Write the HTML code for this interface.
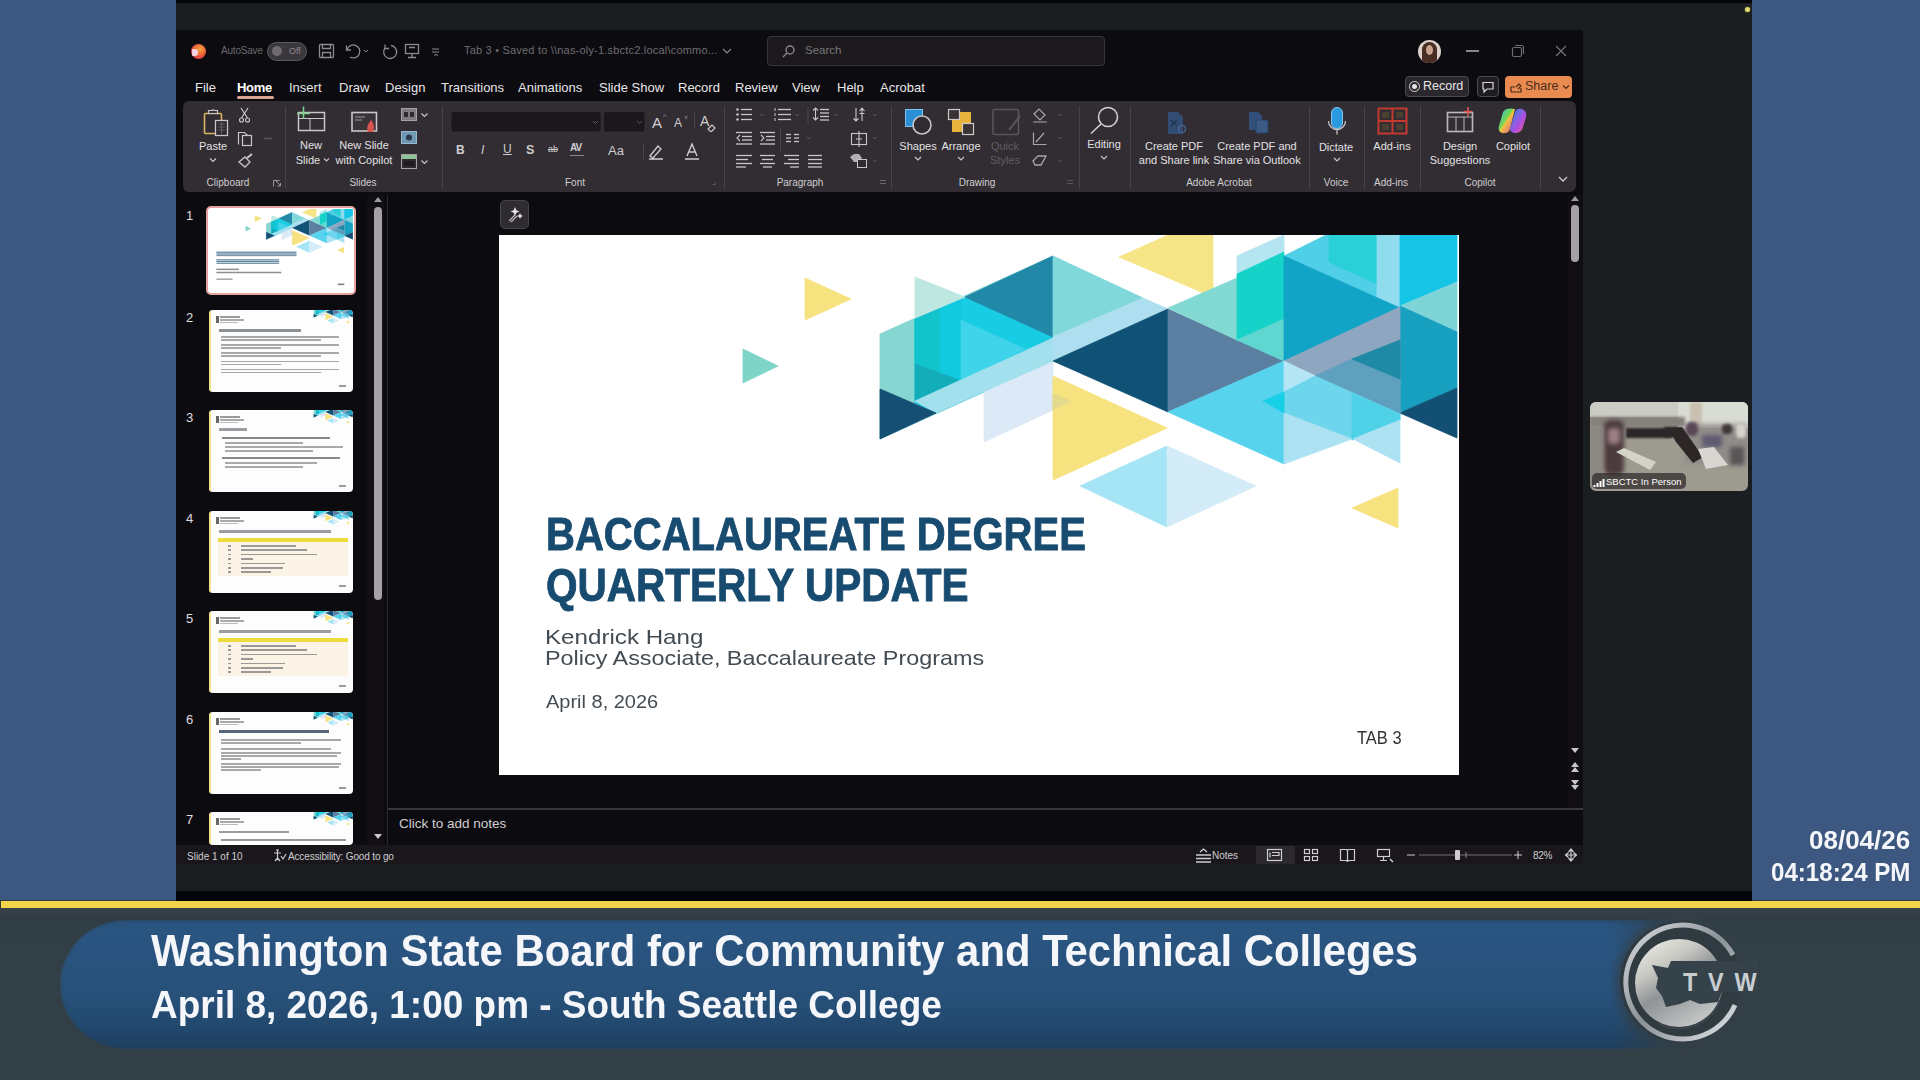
<!DOCTYPE html>
<html><head><meta charset="utf-8">
<style>
*{box-sizing:border-box}
html,body{margin:0;padding:0}
body{width:1920px;height:1080px;overflow:hidden;position:relative;background:#323e45;font-family:"Liberation Sans",sans-serif}
.a{position:absolute}
.t{position:absolute;white-space:nowrap;line-height:1}
.menu{color:#e8e6e8;font-size:13px}
.rb{color:#dcdadc;font-size:11px;text-align:center}
.gl{color:#c9c6c9;font-size:10px}
.sep{position:absolute;width:1px;background:#47434a}
</style></head>
<body>
<!-- side blue panels -->
<div class="a" style="left:0;top:0;width:176px;height:900px;background:#3d5880"></div>
<div class="a" style="left:1752px;top:0;width:168px;height:900px;background:#3d5880"></div>
<!-- screen area -->
<div class="a" style="left:176px;top:0;width:1576px;height:900px;background:#1a1e21"></div>
<div class="a" style="left:176px;top:0;width:1576px;height:3px;background:#050506"></div>
<div class="a" style="left:176px;top:890.5px;width:1576px;height:10px;background:#040506"></div>
<div class="a" style="left:1745px;top:6.5px;width:5px;height:5px;border-radius:50%;background:#e0dc70;box-shadow:0 0 2px #8a8040"></div>
<!-- PowerPoint window -->
<div class="a" id="win" style="left:176px;top:30px;width:1407px;height:834px;background:#0c0b0f"></div>

<!-- title bar -->
<div class="a" style="left:191px;top:44px;width:15px;height:15px;border-radius:50%;background:radial-gradient(circle at 60% 35%,#f6a33a,#e8533a 55%,#c42a5a)"></div>
<div class="a" style="left:192px;top:49px;width:6px;height:7px;background:#f6d0e0;border-radius:1px 3px 3px 1px"></div>
<div class="t" style="left:221px;top:46px;font-size:10px;color:#6a686d;letter-spacing:-0.2px">AutoSave</div>
<div class="a" style="left:267px;top:42px;width:40px;height:19px;border-radius:10px;background:#3b383c;border:1.5px solid #5c595d"></div>
<div class="a" style="left:272px;top:46px;width:10px;height:10px;border-radius:50%;background:#6e6b6f"></div>
<div class="t" style="left:289px;top:47px;font-size:9px;color:#8a878b">Off</div>
<svg class="a" style="left:316px;top:42px" width="130" height="20" viewBox="316 42 130 20">
 <g fill="none" stroke="#8d8a8e" stroke-width="1.3">
  <rect x="319.5" y="44.5" width="14" height="13" rx="1"/>
  <path d="M322.5 44.5v4h8v-4M322.5 57.5v-5h8v5"/>
  <path d="M346.5 45.5v4.5h4.5"/><path d="M347 50a6.5 6.5 0 1 1 3 7"/>
  <path d="M364 50l2 2 2-2" stroke-width="1"/>
  <path d="M391 45.5a6.5 6.5 0 1 1 -6 2.5M385 44.5v4h4"/>
  <rect x="405.5" y="44.5" width="13" height="9"/>
  <path d="M412 53.5v4M408 57.5h8M409 47.5h6"/>
  <path d="M432 49h7M432 52h7M434 55.5l2 -1 2 1" stroke-width="1"/>
 </g>
</svg>
<div class="t" style="left:464px;top:45px;font-size:11px;color:#6f6d72;letter-spacing:0.2px">Tab 3 &bull; Saved to \\nas-oly-1.sbctc2.local\commo...</div>
<svg class="a" style="left:720px;top:46px" width="14" height="10"><path d="M3 3l4 4 4-4" fill="none" stroke="#8a878b" stroke-width="1.2"/></svg>
<div class="a" style="left:767px;top:36px;width:338px;height:30px;border-radius:4px;background:#1c191d;border:1.5px solid #39363a"></div>
<svg class="a" style="left:781px;top:43px" width="16" height="16"><circle cx="9" cy="7" r="4" fill="none" stroke="#8e8b8f" stroke-width="1.3"/><path d="M6 10l-4 4" stroke="#8e8b8f" stroke-width="1.3"/></svg>
<div class="t" style="left:805px;top:45px;font-size:11.5px;color:#79767b">Search</div>
<div class="a" style="left:1418px;top:40px;width:23px;height:23px;border-radius:50%;overflow:hidden;background:#ddd3ca"><div class="a" style="left:4px;top:2px;width:15px;height:24px;border-radius:8px 8px 2px 2px;background:#4a2e24"></div><div class="a" style="left:8px;top:5px;width:7px;height:10px;border-radius:50%;background:#c9a48e"></div></div>
<div class="a" style="left:1466px;top:50px;width:13px;height:1.5px;background:#8a878b"></div>
<svg class="a" style="left:1510px;top:43px" width="18" height="16"><g fill="none" stroke="#6e6b70" stroke-width="1.2"><rect x="2.5" y="4.5" width="9" height="9" rx="1.5"/><path d="M5 2.5h6.5a2 2 0 0 1 2 2v6.5"/></g></svg>
<svg class="a" style="left:1553px;top:43px" width="16" height="16"><path d="M3 3l10 10M13 3l-10 10" stroke="#737075" stroke-width="1.3"/></svg>

<!-- menu bar -->
<div class="t menu" style="left:195px;top:81px">File</div>
<div class="t menu" style="left:237px;top:81px;color:#fff;font-weight:bold;letter-spacing:-0.3px">Home</div>
<div class="a" style="left:237px;top:96px;width:37px;height:3px;border-radius:2px;background:#d9a38e"></div>
<div class="t menu" style="left:289px;top:81px">Insert</div>
<div class="t menu" style="left:339px;top:81px">Draw</div>
<div class="t menu" style="left:385px;top:81px">Design</div>
<div class="t menu" style="left:441px;top:81px">Transitions</div>
<div class="t menu" style="left:518px;top:81px">Animations</div>
<div class="t menu" style="left:599px;top:81px">Slide Show</div>
<div class="t menu" style="left:678px;top:81px">Record</div>
<div class="t menu" style="left:735px;top:81px">Review</div>
<div class="t menu" style="left:792px;top:81px">View</div>
<div class="t menu" style="left:837px;top:81px">Help</div>
<div class="t menu" style="left:880px;top:81px">Acrobat</div>
<div class="a" style="left:1405px;top:76px;width:64px;height:21px;border-radius:4px;background:#2a282c;border:1.5px solid #4d4a4e"></div>
<div class="a" style="left:1409px;top:81px;width:11px;height:11px;border-radius:50%;border:1.5px solid #d8d6d9"></div>
<div class="a" style="left:1412px;top:84px;width:5px;height:5px;border-radius:50%;background:#e8e6e9"></div>
<div class="t" style="left:1423px;top:80px;font-size:12.5px;color:#e8e6e8">Record</div>
<div class="a" style="left:1477px;top:76px;width:22px;height:21px;border-radius:4px;background:#1f1d21;border:1.5px solid #4d4a4e"></div>
<svg class="a" style="left:1481px;top:80px" width="14" height="14"><path d="M2 2.5h10v6.5h-6l-3 3v-3h-1z" fill="none" stroke="#d8d6d9" stroke-width="1.2"/></svg>
<div class="a" style="left:1505px;top:76px;width:67px;height:22px;border-radius:4px;background:#e98a50"></div>
<svg class="a" style="left:1509px;top:80px" width="14" height="14"><path d="M2 12V7h4M2 12h10V8M7 7l3-3 2 2-3 3" fill="none" stroke="#4a2a18" stroke-width="1.2"/></svg>
<div class="t" style="left:1525px;top:80px;font-size:12.5px;color:#4a2c1b">Share</div>
<svg class="a" style="left:1561px;top:82px" width="10" height="10"><path d="M2 3.5l3 3 3-3" fill="none" stroke="#4a2c1b" stroke-width="1.2"/></svg>

<!-- ribbon panel -->
<div class="a" style="left:183px;top:101px;width:1393px;height:91px;background:#312d32;border-radius:6px"></div>
<!-- ribbon labels -->
<div class="t" style="left:113px;top:140.5px;width:200px;text-align:center;font-size:11px;color:#e2e0e3;">Paste</div>
<div class="t" style="left:128px;top:178.0px;width:200px;text-align:center;font-size:10px;color:#cfcdd0;">Clipboard</div>
<div class="t" style="left:211px;top:139.5px;width:200px;text-align:center;font-size:11px;color:#e2e0e3;">New</div>
<div class="t" style="left:208px;top:154.5px;width:200px;text-align:center;font-size:11px;color:#e2e0e3;">Slide</div>
<div class="t" style="left:264px;top:139.5px;width:200px;text-align:center;font-size:11px;color:#e2e0e3;">New Slide</div>
<div class="t" style="left:264px;top:154.5px;width:200px;text-align:center;font-size:11px;color:#e2e0e3;">with Copilot</div>
<div class="t" style="left:263px;top:178.0px;width:200px;text-align:center;font-size:10px;color:#cfcdd0;">Slides</div>
<div class="t" style="left:475px;top:178.0px;width:200px;text-align:center;font-size:10px;color:#cfcdd0;">Font</div>
<div class="t" style="left:700px;top:178.0px;width:200px;text-align:center;font-size:10px;color:#cfcdd0;">Paragraph</div>
<div class="t" style="left:818px;top:140.5px;width:200px;text-align:center;font-size:11px;color:#e2e0e3;">Shapes</div>
<div class="t" style="left:861px;top:140.5px;width:200px;text-align:center;font-size:11px;color:#e2e0e3;">Arrange</div>
<div class="t" style="left:905px;top:140.5px;width:200px;text-align:center;font-size:11px;color:#5f5d60;">Quick</div>
<div class="t" style="left:905px;top:154.5px;width:200px;text-align:center;font-size:11px;color:#5f5d60;">Styles</div>
<div class="t" style="left:877px;top:178.0px;width:200px;text-align:center;font-size:10px;color:#cfcdd0;">Drawing</div>
<div class="t" style="left:1004px;top:138.5px;width:200px;text-align:center;font-size:11px;color:#e2e0e3;">Editing</div>
<div class="t" style="left:1074px;top:140.5px;width:200px;text-align:center;font-size:11px;color:#e2e0e3;">Create PDF</div>
<div class="t" style="left:1074px;top:154.5px;width:200px;text-align:center;font-size:11px;color:#e2e0e3;">and Share link</div>
<div class="t" style="left:1157px;top:140.5px;width:200px;text-align:center;font-size:11px;color:#e2e0e3;">Create PDF and</div>
<div class="t" style="left:1157px;top:154.5px;width:200px;text-align:center;font-size:11px;color:#e2e0e3;">Share via Outlook</div>
<div class="t" style="left:1119px;top:178.0px;width:200px;text-align:center;font-size:10px;color:#cfcdd0;">Adobe Acrobat</div>
<div class="t" style="left:1236px;top:141.5px;width:200px;text-align:center;font-size:11px;color:#e2e0e3;">Dictate</div>
<div class="t" style="left:1236px;top:178.0px;width:200px;text-align:center;font-size:10px;color:#cfcdd0;">Voice</div>
<div class="t" style="left:1292px;top:140.5px;width:200px;text-align:center;font-size:11px;color:#e2e0e3;">Add-ins</div>
<div class="t" style="left:1291px;top:178.0px;width:200px;text-align:center;font-size:10px;color:#cfcdd0;">Add-ins</div>
<div class="t" style="left:1360px;top:140.5px;width:200px;text-align:center;font-size:11px;color:#e2e0e3;">Design</div>
<div class="t" style="left:1360px;top:154.5px;width:200px;text-align:center;font-size:11px;color:#e2e0e3;">Suggestions</div>
<div class="t" style="left:1413px;top:140.5px;width:200px;text-align:center;font-size:11px;color:#e2e0e3;">Copilot</div>
<div class="t" style="left:1380px;top:178.0px;width:200px;text-align:center;font-size:10px;color:#cfcdd0;">Copilot</div>
<div class="sep" style="left:285px;top:106px;height:82px"></div>
<div class="sep" style="left:442px;top:106px;height:82px"></div>
<div class="sep" style="left:724px;top:106px;height:82px"></div>
<div class="sep" style="left:891px;top:106px;height:82px"></div>
<div class="sep" style="left:1079px;top:106px;height:82px"></div>
<div class="sep" style="left:1130px;top:106px;height:82px"></div>
<div class="sep" style="left:1309px;top:106px;height:82px"></div>
<div class="sep" style="left:1364px;top:106px;height:82px"></div>
<div class="sep" style="left:1420px;top:106px;height:82px"></div>
<div class="sep" style="left:1540px;top:106px;height:82px"></div>
<!-- /ribbon labels -->
<!-- ribbon icons --><svg class="a" style="left:0;top:0" width="1920" height="200" viewBox="0 0 1920 200">
<rect x="204.5" y="113.5" width="17" height="20" rx="1" fill="none" stroke="#d8b55e" stroke-width="1.6"/>
<path d="M208.5 113.5v-3h3a2 2 0 0 1 3 0h3v3z" fill="#3a373b" stroke="#c9c6ca" stroke-width="1.2"/>
<rect x="215.5" y="120.5" width="12" height="15" fill="#2e2b2f" stroke="#c9c6ca" stroke-width="1.3"/>
<path d="M218 124h7M218 127h7M218 130h7M221.5 122v12" stroke="#6f6c70" stroke-width="0.8"/>
<path d="M210 158.5l3 3 3-3" fill="none" stroke="#c9c6ca" stroke-width="1.2"/>
<path d="M241 108l6.5 10M248 108l-6.5 10" stroke="#c9c6ca" stroke-width="1.2" fill="none"/><circle cx="241.5" cy="120" r="2" fill="none" stroke="#c9c6ca" stroke-width="1.1"/><circle cx="247.5" cy="120" r="2" fill="none" stroke="#c9c6ca" stroke-width="1.1"/>
<path d="M238.5 144.5v-12h6l3 3" fill="none" stroke="#c9c6ca" stroke-width="1.2"/><rect x="242.5" y="135.5" width="9" height="10" fill="none" stroke="#c9c6ca" stroke-width="1.2"/>
<path d="M239 162l6-5 5 5-5 5z" fill="none" stroke="#c9c6ca" stroke-width="1.3"/><path d="M247 158l5-4" stroke="#c9c6ca" stroke-width="2"/>
<path d="M264 138.5h8" stroke="#5a575b" stroke-width="1.5"/>
<path d="M273.5 186.5v-6h6M276 181l4.5 4.5M280.5 183v3h-3" fill="none" stroke="#9a979b" stroke-width="1"/>
<rect x="298.5" y="112.5" width="26" height="18" fill="none" stroke="#c9c6ca" stroke-width="1.5"/>
<path d="M310 118.5v12M298.5 118.5h26" stroke="#c9c6ca" stroke-width="1"/>
<path d="M303.5 106.5v12M297 113.5h13" stroke="#7fcf8f" stroke-width="1.5"/>
<path d="M324 158.5l2.5 2.5 2.5-2.5" fill="none" stroke="#c9c6ca" stroke-width="1.1"/>
<rect x="352" y="112.5" width="24.5" height="18.5" fill="#3a3438" stroke="#c9c6ca" stroke-width="1.6"/>
<path d="M355 117h10M355 120h7" stroke="#9a979b" stroke-width="1"/>
<path d="M368 132c-2-4 0-8 3-12 3 3 4 8 2 12z" fill="#d9534f"/>
<rect x="401.5" y="108.5" width="15" height="12" fill="#7f7c80" stroke="#a5a2a6" stroke-width="1"/><rect x="404" y="112" width="4" height="5" fill="#2e2b2f"/><rect x="410" y="112" width="4" height="5" fill="#2e2b2f"/>
<path d="M421.5 113.5l3 3 3-3" fill="none" stroke="#c9c6ca" stroke-width="1.2"/>
<rect x="401.5" y="131.5" width="15" height="12" fill="#6f98b4" stroke="#9ab8cc" stroke-width="1"/><circle cx="409" cy="137.5" r="3" fill="#2a3a48"/>
<rect x="401.5" y="154.5" width="15" height="14" fill="#2e2b2f" stroke="#a5a2a6" stroke-width="1"/><rect x="402" y="155" width="14" height="4" fill="#8fc49a"/><rect x="404" y="161" width="10" height="5" fill="#1e1c1f"/>
<path d="M421.5 160.5l3 3 3-3" fill="none" stroke="#c9c6ca" stroke-width="1.2"/>
<rect x="451.5" y="112" width="149" height="19.5" rx="2" fill="#1b181c"/>
<rect x="604" y="112" width="40.5" height="19.5" rx="2" fill="#1b181c"/>
<path d="M593 121l2.5 2.5 2.5-2.5M637 121l2.5 2.5 2.5-2.5" fill="none" stroke="#5e5b5f" stroke-width="1"/>
<path d="M694.5 113v16M643.5 143v16" stroke="#4a474b" stroke-width="1"/>
<circle cx="737.5" cy="109.5" r="1.3" fill="#c9c6ca"/>
<path d="M741 109.5h11" stroke="#c9c6ca" stroke-width="1.3"/>
<circle cx="737.5" cy="114.5" r="1.3" fill="#c9c6ca"/>
<path d="M741 114.5h11" stroke="#c9c6ca" stroke-width="1.3"/>
<circle cx="737.5" cy="119.5" r="1.3" fill="#c9c6ca"/>
<path d="M741 119.5h11" stroke="#c9c6ca" stroke-width="1.3"/>
<path d="M760 114l2 2 2-2" fill="none" stroke="#5a575b" stroke-width="1"/>
<path d="M775 108.0v3" stroke="#c9c6ca" stroke-width="1"/>
<path d="M778 109.5h13" stroke="#c9c6ca" stroke-width="1.3"/>
<path d="M775 113.0v3" stroke="#c9c6ca" stroke-width="1"/>
<path d="M778 114.5h13" stroke="#c9c6ca" stroke-width="1.3"/>
<path d="M775 118.0v3" stroke="#c9c6ca" stroke-width="1"/>
<path d="M778 119.5h13" stroke="#c9c6ca" stroke-width="1.3"/>
<path d="M795 114l2 2 2-2" fill="none" stroke="#5a575b" stroke-width="1"/>
<path d="M808 107v17" stroke="#4a474b" stroke-width="1"/>
<path d="M815.5 108v12M813 110.5l2.5-2.5 2.5 2.5M813 117.5l2.5 2.5 2.5-2.5" fill="none" stroke="#c9c6ca" stroke-width="1.1"/>
<path d="M820 109.5h9" stroke="#c9c6ca" stroke-width="1.3"/>
<path d="M820 113h9" stroke="#c9c6ca" stroke-width="1.3"/>
<path d="M820 116.5h9" stroke="#c9c6ca" stroke-width="1.3"/>
<path d="M820 120h9" stroke="#c9c6ca" stroke-width="1.3"/>
<path d="M834 114l2 2 2-2" fill="none" stroke="#5a575b" stroke-width="1"/>
<path d="M856 108v13M853.5 118.5l2.5 2.5 2.5-2.5M862 121v-13M859.5 111l2.5-3 2.5 3M859.5 113.5h5" fill="none" stroke="#c9c6ca" stroke-width="1.1"/>
<path d="M873 114l2 2 2-2" fill="none" stroke="#5a575b" stroke-width="1"/>
<path d="M736 132.5h16" stroke="#c9c6ca" stroke-width="1.3"/>
<path d="M742 136.5h10" stroke="#c9c6ca" stroke-width="1.3"/>
<path d="M742 140h10" stroke="#c9c6ca" stroke-width="1.3"/>
<path d="M736 144h16" stroke="#c9c6ca" stroke-width="1.3"/>
<path d="M740 135l-3 3 3 3" fill="none" stroke="#c9c6ca" stroke-width="1.1"/>
<path d="M760 132.5h15" stroke="#c9c6ca" stroke-width="1.3"/>
<path d="M766 136.5h9" stroke="#c9c6ca" stroke-width="1.3"/>
<path d="M766 140h9" stroke="#c9c6ca" stroke-width="1.3"/>
<path d="M760 144h15" stroke="#c9c6ca" stroke-width="1.3"/>
<path d="M761 135l3 3-3 3" fill="none" stroke="#c9c6ca" stroke-width="1.1"/>
<path d="M780.5 128v23" stroke="#4a474b" stroke-width="1"/>
<path d="M786 134.5h5" stroke="#c9c6ca" stroke-width="1.3"/>
<path d="M794 134.5h5" stroke="#c9c6ca" stroke-width="1.3"/>
<path d="M786 138h5" stroke="#c9c6ca" stroke-width="1.3"/>
<path d="M794 138h5" stroke="#c9c6ca" stroke-width="1.3"/>
<path d="M786 141.5h5" stroke="#c9c6ca" stroke-width="1.3"/>
<path d="M794 141.5h5" stroke="#c9c6ca" stroke-width="1.3"/>
<path d="M807 137l2 2 2-2" fill="none" stroke="#5a575b" stroke-width="1"/>
<rect x="851.5" y="133.5" width="15" height="11" fill="none" stroke="#c9c6ca" stroke-width="1.1"/><path d="M859 131v16M856 139h6" stroke="#c9c6ca" stroke-width="1.1"/>
<path d="M873 137l2 2 2-2" fill="none" stroke="#5a575b" stroke-width="1"/>
<path d="M736 155.5h16" stroke="#c9c6ca" stroke-width="1.3"/>
<path d="M736 159.5h12" stroke="#c9c6ca" stroke-width="1.3"/>
<path d="M736 163.5h16" stroke="#c9c6ca" stroke-width="1.3"/>
<path d="M736 167h10" stroke="#c9c6ca" stroke-width="1.3"/>
<path d="M760 155.5h15" stroke="#c9c6ca" stroke-width="1.3"/>
<path d="M762 159.5h11" stroke="#c9c6ca" stroke-width="1.3"/>
<path d="M760 163.5h15" stroke="#c9c6ca" stroke-width="1.3"/>
<path d="M763 167h9" stroke="#c9c6ca" stroke-width="1.3"/>
<path d="M784 155.5h15" stroke="#c9c6ca" stroke-width="1.3"/>
<path d="M788 159.5h11" stroke="#c9c6ca" stroke-width="1.3"/>
<path d="M784 163.5h15" stroke="#c9c6ca" stroke-width="1.3"/>
<path d="M790 167h9" stroke="#c9c6ca" stroke-width="1.3"/>
<path d="M808 155.5h14" stroke="#c9c6ca" stroke-width="1.3"/>
<path d="M808 159.5h14" stroke="#c9c6ca" stroke-width="1.3"/>
<path d="M808 163.5h14" stroke="#c9c6ca" stroke-width="1.3"/>
<path d="M808 167h14" stroke="#c9c6ca" stroke-width="1.3"/>
<path d="M850 157l4-3h5l3 4-3 4h-5z" fill="#c9c6ca" opacity="0.85"/><rect x="857.5" y="159.5" width="9" height="8" fill="#2e2b2f" stroke="#c9c6ca" stroke-width="1"/>
<path d="M873 160l2 2 2-2" fill="none" stroke="#5a575b" stroke-width="1"/>
<path d="M880 180.5h6M880 183.5h6" stroke="#6a676b" stroke-width="1"/>
<rect x="905.5" y="109.5" width="17" height="17" fill="#2a8fd4" stroke="#7cc3ee" stroke-width="1"/>
<circle cx="922" cy="125" r="9" fill="#2f2b30" stroke="#c9c6ca" stroke-width="1.6"/>
<path d="M915 157l3 3 3-3" fill="none" stroke="#c9c6ca" stroke-width="1.2"/>
<rect x="952" y="112" width="19" height="20" fill="#e8b33a"/>
<rect x="948.5" y="109.5" width="11" height="10" fill="#3a3336" stroke="#cfc9cc" stroke-width="1.2"/>
<rect x="962.5" y="123.5" width="11" height="11" fill="#3a3336" stroke="#cfc9cc" stroke-width="1.2"/>
<path d="M958 157l3 3 3-3" fill="none" stroke="#c9c6ca" stroke-width="1.2"/>
<rect x="993" y="109.5" width="25.5" height="25" rx="2" fill="none" stroke="#5a575b" stroke-width="1.5"/><path d="M1020 116l-11 14" stroke="#5a575b" stroke-width="2"/>
<path d="M1034 114l5-5 6 6-5 5zM1033 122h14" fill="none" stroke="#a9a6aa" stroke-width="1.2"/>
<path d="M1033.5 132.5v12h13M1036 142l8-9" fill="none" stroke="#a9a6aa" stroke-width="1.2"/>
<path d="M1033 161l5-5h8l-5 9h-6z" fill="none" stroke="#a9a6aa" stroke-width="1.3"/>
<path d="M1058 114l2 2 2-2M1058 137l2 2 2-2M1058 160l2 2 2-2" fill="none" stroke="#5a575b" stroke-width="1"/>
<path d="M1067 180.5h6M1067 183.5h6" stroke="#5a575b" stroke-width="1"/>
<circle cx="1108" cy="117" r="9.5" fill="none" stroke="#d2cfd3" stroke-width="1.6"/><path d="M1101 124l-10 9.5" stroke="#d2cfd3" stroke-width="1.6"/>
<path d="M1101 156l3 3 3-3" fill="none" stroke="#c9c6ca" stroke-width="1.2"/>
<path d="M1168 112h10l5 5v17h-15z" fill="#33507a" opacity="0.9"/><path d="M1171 120l6 6M1171 126l6-6" stroke="#1f3550" stroke-width="1.5"/><circle cx="1182" cy="129" r="3.5" fill="none" stroke="#4a6a92" stroke-width="1.2"/>
<path d="M1249 112h9l4 4v14h-13z" fill="#33507a"/><rect x="1256" y="120" width="12" height="13" rx="1" fill="#3b5a86" stroke="#2a4266" stroke-width="1"/>
<rect x="1331.5" y="107.5" width="11" height="21" rx="5.5" fill="#2a9ae0" stroke="#86c8f0" stroke-width="1"/>
<path d="M1328.5 121a8.5 8.5 0 0 0 17 0M1337 129.5v5" fill="none" stroke="#c4c1c5" stroke-width="1.3"/>
<path d="M1334 158l3 3 3-3" fill="none" stroke="#c9c6ca" stroke-width="1.2"/>
<rect x="1378.5" y="108.5" width="28" height="25" fill="none" stroke="#c23a2e" stroke-width="2"/><path d="M1392.5 108.5v25M1378.5 121h28" stroke="#c23a2e" stroke-width="2"/>
<rect x="1382" y="112" width="7" height="6" fill="#4a3f30"/><rect x="1396" y="112" width="7" height="6" fill="#4a3f30"/><rect x="1382" y="124" width="7" height="6" fill="#4a3f30"/><rect x="1396" y="124" width="7" height="6" fill="#4a3f30"/>
<rect x="1447.5" y="112.5" width="25" height="19" fill="none" stroke="#bdbabe" stroke-width="1.6"/><path d="M1447.5 117h25M1456 117v14M1464 117v14" stroke="#bdbabe" stroke-width="1"/>
<path d="M1468 107v9M1463.5 111.5h9" stroke="#d9534f" stroke-width="1.6"/>
<defs><linearGradient id="cpg" x1="0" y1="0" x2="1" y2="1"><stop offset="0" stop-color="#2bb5f0"/><stop offset="0.45" stop-color="#7ad84a"/><stop offset="0.5" stop-color="#f0c040"/><stop offset="1" stop-color="#e04a9a"/></linearGradient><linearGradient id="cpg2" x1="0" y1="0" x2="1" y2="1"><stop offset="0" stop-color="#1a8fe8"/><stop offset="0.6" stop-color="#b04ee0"/><stop offset="1" stop-color="#f06070"/></linearGradient></defs>
<path d="M1503 112c2-4 8-4 12-3l-5 20c-1 4-5 5-8 4-3-1-4-4-3-7z" fill="url(#cpg)"/>
<path d="M1510 129l5-17c1-3 4-4 7-3 3 1 5 4 4 8l-3 10c-1 4-4 6-8 6-3 0-5-2-5-4z" fill="url(#cpg2)"/>
<path d="M1559 177l4 4 4-4" fill="none" stroke="#d0cdd1" stroke-width="1.3"/>
</svg>
<div class="t" style="left:456px;top:144px;font-size:12px;font-weight:bold;color:#cfcdd0">B</div>
<div class="t" style="left:481px;top:144px;font-size:12px;font-style:italic;color:#cfcdd0">I</div>
<div class="t" style="left:503px;top:143px;font-size:12px;color:#cfcdd0;text-decoration:underline">U</div>
<div class="t" style="left:526px;top:144px;font-size:12.5px;font-weight:bold;color:#cfcdd0">S</div>
<div class="t" style="left:548px;top:145px;font-size:9px;color:#cfcdd0;text-decoration:line-through">ab</div>
<div class="t" style="left:570px;top:143px;font-size:10px;font-weight:bold;color:#cfcdd0;letter-spacing:-1px">AV</div>
<div class="a" style="left:570px;top:155px;width:14px;height:1px;background:#8a878b"></div>
<div class="t" style="left:608px;top:144px;font-size:13px;color:#cfcdd0">Aa</div>
<div class="t" style="left:652px;top:115px;font-size:15px;color:#cfcdd0">A</div>
<div class="t" style="left:663px;top:113px;font-size:7px;color:#9a979b">^</div>
<div class="t" style="left:674px;top:117px;font-size:12px;color:#cfcdd0">A</div>
<div class="t" style="left:684px;top:114px;font-size:7px;color:#9a979b">˅</div>
<div class="t" style="left:700px;top:114px;font-size:14px;color:#cfcdd0">A</div>
<svg class="a" style="left:647px;top:141px" width="60" height="20"><path d="M3 15l8-10 3 3-8 9zM2 18h14" fill="none" stroke="#cfcdd0" stroke-width="1.3"/><path d="M40 15l5-12 5 12M42 11h6M38 18h14" fill="none" stroke="#cfcdd0" stroke-width="1.4"/></svg>
<svg class="a" style="left:705px;top:122px" width="14" height="10"><path d="M3 7l4-4 3 3-4 4z" fill="none" stroke="#cfcdd0" stroke-width="1.2"/></svg>
<div class="t" style="left:712px;top:177px;font-size:9px;color:#6a676b">⌟</div>
<!-- /ribbon icons -->
<!-- status bar -->
<div class="a" style="left:176px;top:845px;width:1407px;height:19px;background:#19171b"></div>
<!-- slide -->
<div class="a" id="slide" style="left:499px;top:235px;width:959.5px;height:540px;background:#ffffff;overflow:hidden"><svg class="a" style="left:0;top:0" width="960" height="540" viewBox="499 235 960 540">
<rect x="499" y="235" width="960" height="540" fill="#fff"/>
<g id="tri">
<polygon points="805,278 851,299 805,320" fill="#f6e27e" stroke="#f6e27e" stroke-width="0.8" stroke-linejoin="round"/>
<polygon points="743,349 778,366 743,383" fill="#7fd4c8" stroke="#7fd4c8" stroke-width="0.8" stroke-linejoin="round"/>
<polygon points="1352,508 1398,488 1398,528" fill="#f6e27e" stroke="#f6e27e" stroke-width="0.8" stroke-linejoin="round"/>
<polygon points="880,334 1053,256 1053,361 880,439" fill="#86d6d2" stroke="#86d6d2" stroke-width="0.8" stroke-linejoin="round"/>
<polygon points="915,319 965,297 1053,337 1053,361 936,413 915,403" fill="#17cce3" stroke="#17cce3" stroke-width="0.8" stroke-linejoin="round"/>
<polygon points="915,319 961,299 961,380 915,364" fill="#12cae0" stroke="#12cae0" stroke-width="0.8" stroke-linejoin="round"/>
<polygon points="915,319 939,308.5 939,372 915,364" fill="#13c3cc" stroke="#13c3cc" stroke-width="0.8" stroke-linejoin="round"/>
<polygon points="1053,256 965,297 1053,337" fill="#2188a8" stroke="#2188a8" stroke-width="0.8" stroke-linejoin="round"/>
<polygon points="961,320 1025,349 961,380" fill="#3fd4ea" stroke="#3fd4ea" stroke-width="0.8" stroke-linejoin="round"/>
<polygon points="915,364 959,380 915,401" fill="#13adb9" stroke="#13adb9" stroke-width="0.8" stroke-linejoin="round"/>
<polygon points="984,380 1053,350 1053,410 984,442" fill="#dce9f6" stroke="#dce9f6" stroke-width="0.8" stroke-linejoin="round"/>
<polygon points="915,401 1053,338 1053,361 936,413" fill="#a3e0ee" stroke="#a3e0ee" stroke-width="0.8" stroke-linejoin="round"/>
<polygon points="880,389 936,413 880,439" fill="#154f73" stroke="#154f73" stroke-width="0.8" stroke-linejoin="round"/>
<polygon points="915,277 965,297 915,318" fill="#bfe7e2" stroke="#bfe7e2" stroke-width="0.8" stroke-linejoin="round"/>
<polygon points="1053,256 1143,298 1053,337" fill="#80d8da" stroke="#80d8da" stroke-width="0.8" stroke-linejoin="round"/>
<polygon points="1053,337 1143,298 1168,309 1053,361" fill="#addff0" stroke="#addff0" stroke-width="0.8" stroke-linejoin="round"/>
<polygon points="1053,361 1168,309 1168,412" fill="#0f5276" stroke="#0f5276" stroke-width="0.8" stroke-linejoin="round"/>
<polygon points="1168,309 1284,361 1168,412" fill="#5b7fa1" stroke="#5b7fa1" stroke-width="0.8" stroke-linejoin="round"/>
<polygon points="1168,412 1284,361 1284,464" fill="#58d3ee" stroke="#58d3ee" stroke-width="0.8" stroke-linejoin="round"/>
<polygon points="1053,376 1167,428 1053,480" fill="#f6e27e" stroke="#f6e27e" stroke-width="0.8" stroke-linejoin="round"/>
<polygon points="1053,394 1071,401 1053,410" fill="#e3da8c" stroke="#e3da8c" stroke-width="0.8" stroke-linejoin="round"/>
<polygon points="1119,257 1213,215 1213,297" fill="#f6e586" stroke="#f6e586" stroke-width="0.8" stroke-linejoin="round"/>
<polygon points="1080,486 1167,446 1167,527" fill="#a6e5f5" stroke="#a6e5f5" stroke-width="0.8" stroke-linejoin="round"/>
<polygon points="1167,446 1256,486 1167,527" fill="#d4ecf8" stroke="#d4ecf8" stroke-width="0.8" stroke-linejoin="round"/>
<polygon points="1168,308 1237,278 1237,340" fill="#82d9d3" stroke="#82d9d3" stroke-width="0.8" stroke-linejoin="round"/>
<polygon points="1237,256 1284,235 1284,252 1237,274" fill="#b5e5f0" stroke="#b5e5f0" stroke-width="0.8" stroke-linejoin="round"/>
<polygon points="1237,274 1284,252 1284,320 1237,341" fill="#16d3c9" stroke="#16d3c9" stroke-width="0.8" stroke-linejoin="round"/>
<polygon points="1237,340 1284,319 1284,361" fill="#5fd6cf" stroke="#5fd6cf" stroke-width="0.8" stroke-linejoin="round"/>
<polygon points="1284,256 1326,235 1400,235 1400,308" fill="#50cfe8" stroke="#50cfe8" stroke-width="0.8" stroke-linejoin="round"/>
<polygon points="1329,235 1377,235 1377,284 1329,262" fill="#2ad0d8" stroke="#2ad0d8" stroke-width="0.8" stroke-linejoin="round"/>
<polygon points="1377,235 1400,235 1400,308 1377,297" fill="#8fdcef" stroke="#8fdcef" stroke-width="0.8" stroke-linejoin="round"/>
<polygon points="1284,256 1400,308 1284,361" fill="#12a4c6" stroke="#12a4c6" stroke-width="0.8" stroke-linejoin="round"/>
<polygon points="1400,235 1457,235 1457,282 1400,306" fill="#16c5e5" stroke="#16c5e5" stroke-width="0.8" stroke-linejoin="round"/>
<polygon points="1400,306 1457,282 1457,333" fill="#7fd4d8" stroke="#7fd4d8" stroke-width="0.8" stroke-linejoin="round"/>
<polygon points="1400,306 1457,332 1457,388 1400,413" fill="#17a0c0" stroke="#17a0c0" stroke-width="0.8" stroke-linejoin="round"/>
<polygon points="1400,413 1457,388 1457,438" fill="#134f72" stroke="#134f72" stroke-width="0.8" stroke-linejoin="round"/>
<polygon points="1284,361 1400,307 1400,414" fill="#8ea6bf" stroke="#8ea6bf" stroke-width="0.8" stroke-linejoin="round"/>
<polygon points="1315,376 1352,359 1400,379 1400,414" fill="#5fa0bf" stroke="#5fa0bf" stroke-width="0.8" stroke-linejoin="round"/>
<polygon points="1352,359 1400,340 1400,379" fill="#1e8aa5" stroke="#1e8aa5" stroke-width="0.8" stroke-linejoin="round"/>
<polygon points="1284,361 1315,376 1302,384 1284,392" fill="#b3e5f4" stroke="#b3e5f4" stroke-width="0.8" stroke-linejoin="round"/>
<polygon points="1284,392 1315,376 1400,414 1400,420 1352,440 1284,413" fill="#6dd5ec" stroke="#6dd5ec" stroke-width="0.8" stroke-linejoin="round"/>
<polygon points="1352,393 1400,414 1400,420 1352,440" fill="#4fd1e8" stroke="#4fd1e8" stroke-width="0.8" stroke-linejoin="round"/>
<polygon points="1284,413 1352,439 1284,464" fill="#ade2f3" stroke="#ade2f3" stroke-width="0.8" stroke-linejoin="round"/>
<polygon points="1353,439 1400,420 1400,463" fill="#ade2f3" stroke="#ade2f3" stroke-width="0.8" stroke-linejoin="round"/>
<polygon points="1263,401 1284,392 1284,413" fill="#17cfe6" stroke="#17cfe6" stroke-width="0.8" stroke-linejoin="round"/>
</g>
</svg>
</div>


<div class="t" id="st1" style="left:546px;top:510px;font-size:47px;font-weight:bold;color:#184b70;-webkit-text-stroke:0.9px #184b70;transform-origin:0 0;transform:scaleX(0.852)">BACCALAUREATE DEGREE</div>
<div class="t" id="st2" style="left:546px;top:561px;font-size:47px;font-weight:bold;color:#184b70;-webkit-text-stroke:0.9px #184b70;transform-origin:0 0;transform:scaleX(0.862)">QUARTERLY UPDATE</div>
<div class="t" id="st3" style="left:545px;top:626px;font-size:21px;color:#434b53;transform-origin:0 0;transform:scaleX(1.15)">Kendrick Hang</div>
<div class="t" id="st4" style="left:545px;top:647px;font-size:21px;color:#434b53;transform-origin:0 0;transform:scaleX(1.113)">Policy Associate, Baccalaureate Programs</div>
<div class="t" id="st5" style="left:546px;top:693px;font-size:18px;color:#434b53;transform-origin:0 0;transform:scaleX(1.11)">April 8, 2026</div>
<div class="t" id="st6" style="left:1357px;top:729px;font-size:18px;color:#333;transform-origin:0 0;transform:scaleX(0.915)">TAB 3</div>

<!-- panes -->
<div class="t" style="left:186px;top:209px;font-size:13px;color:#e0dee1">1</div>
<div class="t" style="left:186px;top:311px;font-size:13px;color:#e0dee1">2</div>
<div class="t" style="left:186px;top:411px;font-size:13px;color:#e0dee1">3</div>
<div class="t" style="left:186px;top:512px;font-size:13px;color:#e0dee1">4</div>
<div class="t" style="left:186px;top:612px;font-size:13px;color:#e0dee1">5</div>
<div class="t" style="left:186px;top:713px;font-size:13px;color:#e0dee1">6</div>
<div class="t" style="left:186px;top:813px;font-size:13px;color:#e0dee1">7</div>
<div class="a" style="left:206px;top:206px;width:150px;height:89px;border-radius:5px;border:2px solid #e3a29c;background:#fff"></div>
<svg class="a" style="left:209px;top:209px" width="144" height="83" viewBox="499 235 959 553" preserveAspectRatio="none"><use href="#tri"/>
<g fill="#1f5276" opacity="0.75"><rect x="548" y="519" width="534" height="8"/><rect x="548" y="531" width="534" height="8"/><rect x="548" y="543" width="534" height="6"/><rect x="548" y="570" width="418" height="8"/><rect x="548" y="582" width="418" height="8"/><rect x="548" y="594" width="418" height="6"/></g>
<rect x="548" y="632" width="150" height="10" fill="#8a8f94"/><rect x="548" y="653" width="432" height="10" fill="#8a8f94"/><rect x="548" y="698" width="108" height="9" fill="#9a9a9a"/><rect x="1357" y="732" width="43" height="10" fill="#777"/></svg>
<div class="a" style="left:209px;top:310px;width:144px;height:82px;border-radius:4px;background:#fdfdfd;overflow:hidden">
<div class="a" style="left:0;top:0;width:2px;height:82px;background:#f1e38a"></div>
<svg class="a" style="left:104px;top:0" width="40" height="17" viewBox="870 330 590 250" preserveAspectRatio="none" style="opacity:0.9"><use href="#tri"/></svg>
<div class="a" style="left:7px;top:6px;width:3px;height:7px;background:#666"></div><div class="a" style="left:11px;top:6px;width:20px;height:1.5px;background:#9a9a9a"></div><div class="a" style="left:11px;top:9px;width:24px;height:1.5px;background:#aaa"></div><div class="a" style="left:11px;top:12px;width:18px;height:1px;background:#bbb"></div>
<div class="a" style="left:10px;top:19px;width:82px;height:2.5px;background:#8c9196"></div>
<div class="a" style="left:12px;top:26.0px;width:118px;height:1.5px;background:#a9a9a9"></div><div class="a" style="left:12px;top:29.0px;width:100px;height:1.5px;background:#a9a9a9"></div>
<div class="a" style="left:12px;top:34.2px;width:118px;height:1.5px;background:#a9a9a9"></div><div class="a" style="left:12px;top:37.2px;width:60px;height:1.5px;background:#a9a9a9"></div>
<div class="a" style="left:12px;top:42.4px;width:118px;height:1.5px;background:#a9a9a9"></div><div class="a" style="left:12px;top:45.4px;width:100px;height:1.5px;background:#a9a9a9"></div>
<div class="a" style="left:12px;top:50.599999999999994px;width:118px;height:1.5px;background:#a9a9a9"></div><div class="a" style="left:12px;top:53.599999999999994px;width:60px;height:1.5px;background:#a9a9a9"></div>
<div class="a" style="left:12px;top:58.8px;width:118px;height:1.5px;background:#a9a9a9"></div><div class="a" style="left:12px;top:61.8px;width:100px;height:1.5px;background:#a9a9a9"></div>
<div class="a" style="left:130px;top:75px;width:7px;height:2px;background:#999"></div>
</div>
<div class="a" style="left:209px;top:410px;width:144px;height:82px;border-radius:4px;background:#fdfdfd;overflow:hidden">
<div class="a" style="left:0;top:0;width:2px;height:82px;background:#f1e38a"></div>
<svg class="a" style="left:104px;top:0" width="40" height="17" viewBox="870 330 590 250" preserveAspectRatio="none" style="opacity:0.9"><use href="#tri"/></svg>
<div class="a" style="left:7px;top:6px;width:3px;height:7px;background:#666"></div><div class="a" style="left:11px;top:6px;width:20px;height:1.5px;background:#9a9a9a"></div><div class="a" style="left:11px;top:9px;width:24px;height:1.5px;background:#aaa"></div><div class="a" style="left:11px;top:12px;width:18px;height:1px;background:#bbb"></div>
<div class="a" style="left:10px;top:18px;width:28px;height:2.5px;background:#9a9ea2"></div>
<div class="a" style="left:13px;top:27px;width:108px;height:1.8px;background:#8a8a8a"></div>
<div class="a" style="left:16px;top:32px;width:78px;height:1.5px;background:#a9a9a9"></div>
<div class="a" style="left:16px;top:36px;width:118px;height:1.5px;background:#a9a9a9"></div>
<div class="a" style="left:16px;top:40px;width:88px;height:1.5px;background:#a9a9a9"></div>
<div class="a" style="left:13px;top:47px;width:118px;height:1.8px;background:#8a8a8a"></div>
<div class="a" style="left:16px;top:52px;width:92px;height:1.5px;background:#a9a9a9"></div><div class="a" style="left:16px;top:56px;width:78px;height:1.5px;background:#a9a9a9"></div>
<div class="a" style="left:130px;top:75px;width:7px;height:2px;background:#999"></div>
</div>
<div class="a" style="left:209px;top:511px;width:144px;height:82px;border-radius:4px;background:#fdfdfd;overflow:hidden">
<div class="a" style="left:0;top:0;width:2px;height:82px;background:#f1e38a"></div>
<svg class="a" style="left:104px;top:0" width="40" height="17" viewBox="870 330 590 250" preserveAspectRatio="none" style="opacity:0.9"><use href="#tri"/></svg>
<div class="a" style="left:7px;top:6px;width:3px;height:7px;background:#666"></div><div class="a" style="left:11px;top:6px;width:20px;height:1.5px;background:#9a9a9a"></div><div class="a" style="left:11px;top:9px;width:24px;height:1.5px;background:#aaa"></div><div class="a" style="left:11px;top:12px;width:18px;height:1px;background:#bbb"></div>
<div class="a" style="left:10px;top:19px;width:112px;height:2.5px;background:#9a9ea2"></div>
<div class="a" style="left:9px;top:27px;width:130px;height:4px;background:#eedc3c"></div>
<div class="a" style="left:9px;top:31px;width:130px;height:34px;background:#fbf4e6"></div>
<div class="a" style="left:19px;top:34.0px;width:3px;height:1.5px;background:#999"></div><div class="a" style="left:32px;top:34.0px;width:55px;height:1.5px;background:#999"></div>
<div class="a" style="left:19px;top:38.4px;width:3px;height:1.5px;background:#999"></div><div class="a" style="left:32px;top:38.4px;width:66px;height:1.5px;background:#999"></div>
<div class="a" style="left:19px;top:42.8px;width:3px;height:1.5px;background:#999"></div><div class="a" style="left:32px;top:42.8px;width:76px;height:1.5px;background:#999"></div>
<div class="a" style="left:19px;top:47.2px;width:3px;height:1.5px;background:#999"></div><div class="a" style="left:32px;top:47.2px;width:12px;height:1.5px;background:#999"></div>
<div class="a" style="left:19px;top:51.6px;width:3px;height:1.5px;background:#999"></div><div class="a" style="left:32px;top:51.6px;width:44px;height:1.5px;background:#999"></div>
<div class="a" style="left:19px;top:56.0px;width:3px;height:1.5px;background:#999"></div><div class="a" style="left:32px;top:56.0px;width:42px;height:1.5px;background:#999"></div>
<div class="a" style="left:19px;top:60.400000000000006px;width:3px;height:1.5px;background:#999"></div><div class="a" style="left:32px;top:60.400000000000006px;width:30px;height:1.5px;background:#999"></div>
<div class="a" style="left:130px;top:74px;width:7px;height:2px;background:#999"></div>
</div>
<div class="a" style="left:209px;top:611px;width:144px;height:82px;border-radius:4px;background:#fdfdfd;overflow:hidden">
<div class="a" style="left:0;top:0;width:2px;height:82px;background:#f1e38a"></div>
<svg class="a" style="left:104px;top:0" width="40" height="17" viewBox="870 330 590 250" preserveAspectRatio="none" style="opacity:0.9"><use href="#tri"/></svg>
<div class="a" style="left:7px;top:6px;width:3px;height:7px;background:#666"></div><div class="a" style="left:11px;top:6px;width:20px;height:1.5px;background:#9a9a9a"></div><div class="a" style="left:11px;top:9px;width:24px;height:1.5px;background:#aaa"></div><div class="a" style="left:11px;top:12px;width:18px;height:1px;background:#bbb"></div>
<div class="a" style="left:10px;top:19px;width:112px;height:2.5px;background:#9a9ea2"></div>
<div class="a" style="left:9px;top:27px;width:130px;height:4px;background:#eedc3c"></div>
<div class="a" style="left:9px;top:31px;width:130px;height:34px;background:#fbf4e6"></div>
<div class="a" style="left:19px;top:34.0px;width:3px;height:1.5px;background:#999"></div><div class="a" style="left:32px;top:34.0px;width:55px;height:1.5px;background:#999"></div>
<div class="a" style="left:19px;top:38.4px;width:3px;height:1.5px;background:#999"></div><div class="a" style="left:32px;top:38.4px;width:66px;height:1.5px;background:#999"></div>
<div class="a" style="left:19px;top:42.8px;width:3px;height:1.5px;background:#999"></div><div class="a" style="left:32px;top:42.8px;width:76px;height:1.5px;background:#999"></div>
<div class="a" style="left:19px;top:47.2px;width:3px;height:1.5px;background:#999"></div><div class="a" style="left:32px;top:47.2px;width:12px;height:1.5px;background:#999"></div>
<div class="a" style="left:19px;top:51.6px;width:3px;height:1.5px;background:#999"></div><div class="a" style="left:32px;top:51.6px;width:44px;height:1.5px;background:#999"></div>
<div class="a" style="left:19px;top:56.0px;width:3px;height:1.5px;background:#999"></div><div class="a" style="left:32px;top:56.0px;width:42px;height:1.5px;background:#999"></div>
<div class="a" style="left:19px;top:60.400000000000006px;width:3px;height:1.5px;background:#999"></div><div class="a" style="left:32px;top:60.400000000000006px;width:30px;height:1.5px;background:#999"></div>
<div class="a" style="left:130px;top:74px;width:7px;height:2px;background:#999"></div>
</div>
<div class="a" style="left:209px;top:712px;width:144px;height:82px;border-radius:4px;background:#fdfdfd;overflow:hidden">
<div class="a" style="left:0;top:0;width:2px;height:82px;background:#f1e38a"></div>
<svg class="a" style="left:104px;top:0" width="40" height="17" viewBox="870 330 590 250" preserveAspectRatio="none" style="opacity:0.9"><use href="#tri"/></svg>
<div class="a" style="left:7px;top:6px;width:3px;height:7px;background:#666"></div><div class="a" style="left:11px;top:6px;width:20px;height:1.5px;background:#9a9a9a"></div><div class="a" style="left:11px;top:9px;width:24px;height:1.5px;background:#aaa"></div><div class="a" style="left:11px;top:12px;width:18px;height:1px;background:#bbb"></div>
<div class="a" style="left:10px;top:18px;width:110px;height:2.5px;background:#55657a"></div>
<div class="a" style="left:12px;top:27px;width:120px;height:1.5px;background:#a9a9a9"></div>
<div class="a" style="left:12px;top:30px;width:80px;height:1.5px;background:#a9a9a9"></div>
<div class="a" style="left:12px;top:36px;width:110px;height:1.5px;background:#a9a9a9"></div>
<div class="a" style="left:12px;top:40px;width:120px;height:1.5px;background:#a9a9a9"></div>
<div class="a" style="left:12px;top:43px;width:116px;height:1.5px;background:#a9a9a9"></div>
<div class="a" style="left:12px;top:46px;width:20px;height:1.5px;background:#a9a9a9"></div>
<div class="a" style="left:12px;top:51px;width:120px;height:1.5px;background:#a9a9a9"></div>
<div class="a" style="left:12px;top:54px;width:118px;height:1.5px;background:#a9a9a9"></div>
<div class="a" style="left:12px;top:57px;width:40px;height:1.5px;background:#a9a9a9"></div>
<div class="a" style="left:130px;top:75px;width:7px;height:2px;background:#999"></div>
</div>
<div class="a" style="left:209px;top:812px;width:144px;height:33px;border-radius:4px;background:#fdfdfd;overflow:hidden">
<div class="a" style="left:0;top:0;width:2px;height:82px;background:#f1e38a"></div>
<svg class="a" style="left:104px;top:0" width="40" height="17" viewBox="870 330 590 250" preserveAspectRatio="none" style="opacity:0.9"><use href="#tri"/></svg>
<div class="a" style="left:7px;top:6px;width:3px;height:7px;background:#666"></div><div class="a" style="left:11px;top:6px;width:20px;height:1.5px;background:#9a9a9a"></div><div class="a" style="left:11px;top:9px;width:24px;height:1.5px;background:#aaa"></div><div class="a" style="left:11px;top:12px;width:18px;height:1px;background:#bbb"></div>
<div class="a" style="left:10px;top:19px;width:70px;height:2px;background:#9a9ea2"></div>
<div class="a" style="left:12px;top:27px;width:125px;height:1.8px;background:#999"></div>
</div>
<div class="a" style="left:367px;top:195px;width:17px;height:650px;background:#110f13"></div>
<div class="a" style="left:374px;top:207px;width:8px;height:393px;border-radius:4px;background:#a3a1a4"></div>
<svg class="a" style="left:372px;top:194px" width="12" height="10"><path d="M2 8l4-5 4 5z" fill="#9b999c"/></svg>
<svg class="a" style="left:372px;top:832px" width="12" height="10"><path d="M2 2l4 5 4-5z" fill="#c9c7ca"/></svg>
<div class="a" style="left:387px;top:195px;width:1px;height:650px;background:#2a282c"></div>
<div class="a" style="left:388px;top:808px;width:1195px;height:1.5px;background:#3a383c"></div>
<div class="t" style="left:399px;top:817px;font-size:13.5px;color:#d0ced1">Click to add notes</div>
<div class="a" style="left:1568px;top:195px;width:15px;height:613px;background:#100e12"></div>
<svg class="a" style="left:1569px;top:193px" width="12" height="10"><path d="M2 8l4-5 4 5z" fill="#9b999c"/></svg>
<div class="a" style="left:1571px;top:205px;width:8px;height:57px;border-radius:4px;background:#a3a1a4"></div>
<svg class="a" style="left:1568px;top:745px" width="14" height="45"><path d="M3 3l4 5 4-5z" fill="#c9c7ca"/><path d="M3 22l4-5 4 5zM3 27l4-5 4 5z" fill="#c9c7ca"/><path d="M3 35l4 5 4-5zM3 40l4 5 4-5z" fill="#c9c7ca"/></svg>
<div class="a" style="left:500px;top:200px;width:29px;height:29px;border-radius:5px;background:#2f2c31;border:1px solid #48454a"></div>
<svg class="a" style="left:505px;top:205px" width="20" height="20"><path d="M4 16l6-6M6 17l6-6" stroke="#bdbbbe" stroke-width="1.2" fill="none"/><path d="M10 2l1.3 3.2 3.2 1.3-3.2 1.3-1.3 3.2-1.3-3.2-3.2-1.3 3.2-1.3zM15 8l.9 2.1 2.1.9-2.1.9-.9 2.1-.9-2.1-2.1-.9 2.1-.9z" fill="#e8e6e9"/></svg>
<div class="t" style="left:187px;top:852px;font-size:10px;color:#cfcdd0">Slide 1 of 10</div>
<svg class="a" style="left:271px;top:848px" width="16" height="15"><path d="M5 2h3M6.5 2v10M3 5h7M10 8l2 3 3-5M4 13l2.5-3 2.5 3" stroke="#cfcdd0" stroke-width="1.2" fill="none"/></svg>
<div class="t" style="left:288px;top:852px;font-size:10px;color:#cfcdd0;letter-spacing:-0.15px">Accessibility: Good to go</div>
<svg class="a" style="left:1195px;top:847px" width="18" height="17"><path d="M1 8h15M1 11.5h15M1 15h15M5 5l3.5-3 3.5 3" stroke="#cfcdd0" stroke-width="1.3" fill="none"/></svg>
<div class="t" style="left:1212px;top:851px;font-size:10px;color:#cfcdd0">Notes</div>
<div class="a" style="left:1256px;top:846px;width:39px;height:18px;background:#2b292d"></div>
<svg class="a" style="left:1260px;top:846px" width="340" height="18"><g fill="none" stroke="#cfcdd0" stroke-width="1.2"><rect x="7.5" y="3.5" width="14" height="11"/><path d="M10 6.5v5M12 6.5h7v3h-7"/><rect x="44.5" y="3.5" width="5" height="4"/><rect x="52.5" y="3.5" width="5" height="4"/><rect x="44.5" y="10.5" width="5" height="4"/><rect x="52.5" y="10.5" width="5" height="4"/><path d="M80.5 3.5h6l1 1 1-1h6v11h-6l-1 1-1-1h-6z M87.5 4v11"/><rect x="117.5" y="3.5" width="12" height="7"/><path d="M123.5 10.5v4M120 14.5h7"/><path d="M147 9h8" stroke-width="1"/><path d="M159 9h93" stroke="#8a878b" stroke-width="0.8"/><path d="M254 9h8M258 5v8" stroke-width="1"/><path d="M306 9h10M311 4v10M308.5 6l2.5-3 2.5 3M308.5 12l2.5 3 2.5-3M308.5 6.5l-3 2.5 3 2.5M313.5 6.5l3 2.5-3 2.5"/></g><rect x="195" y="4" width="5" height="10" rx="1" fill="#cfcdd0"/><path d="M206 6v6" stroke="#8a878b"/><path d="M130 13l3 3" stroke="#cfcdd0" stroke-width="1.5"/></svg>
<div class="t" style="left:1533px;top:851px;font-size:10px;color:#cfcdd0;letter-spacing:-0.3px">82%</div>
<!-- /panes -->
<!-- bottom banner -->
<div class="a" style="left:0;top:900.5px;width:1920px;height:7.5px;background:#f2d44c"></div>
<div class="a" style="left:0;top:900px;width:1px;height:8px;background:#3a3a30"></div>
<div class="a" style="left:0;top:908px;width:1920px;height:172px;background:linear-gradient(#3a4248 0,#343e45 5px,#313d45 12px,#333f46 40px,#333f46 100%)"></div>
<div class="a" style="left:60px;top:920px;width:1625px;height:129px;-webkit-mask-image:linear-gradient(to right,#000 0,#000 1550px,transparent 1625px);border-radius:66px 0 0 66px/64px 0 0 64px;background:linear-gradient(#27507a 0,#2a5581 10px,#275079 60%,#21476c 85%,#1d3e5e 100%);filter:blur(1.6px)"></div>
<div class="a" style="left:1560px;top:915px;width:240px;height:140px;background:radial-gradient(ellipse 70px 72px at 120px 68px,rgba(51,63,70,1) 62%,rgba(51,63,70,0.8) 80%,rgba(51,63,70,0) 100%)"></div>
<div class="t" id="bt1" style="left:151px;top:929px;font-size:44px;font-weight:bold;color:#f4f6fa;transform-origin:0 0;transform:scaleX(0.951)">Washington State Board for Community and Technical Colleges</div>
<div class="t" id="bt2" style="left:151px;top:985.5px;font-size:38.5px;font-weight:bold;color:#f4f6fa;transform-origin:0 0;transform:scaleX(0.96)">April 8, 2026, 1:00 pm - South Seattle College</div>
<svg class="a" style="left:1600px;top:900px" width="200" height="170" viewBox="1600 900 200 170">
 <defs>
  <linearGradient id="ring" x1="0" y1="0" x2="1" y2="1"><stop offset="0" stop-color="#d8dcdf"/><stop offset="0.5" stop-color="#8a9298"/><stop offset="1" stop-color="#e0e4e6"/></linearGradient>
  <linearGradient id="disc" x1="0" y1="0" x2="0.6" y2="1"><stop offset="0" stop-color="#f2f0ea"/><stop offset="0.35" stop-color="#c9c9c4"/><stop offset="0.6" stop-color="#8f9396"/><stop offset="1" stop-color="#c2c4c4"/></linearGradient>
 </defs>
 <circle cx="1681" cy="982" r="61" fill="#2f3a41"/>
 <path d="M1733 955 A57 57 0 1 0 1735 1005" fill="none" stroke="url(#ring)" stroke-width="5"/>
 <circle cx="1679" cy="983" r="44" fill="url(#disc)"/>
 <path d="M1720 1000 A44 44 0 0 1 1660 1024" fill="none" stroke="#3c464c" stroke-width="2"/>
 <path d="M1652 965 L1668 968 L1671 961 L1758 961 L1758 992 L1722 992 L1718 1002 L1700 1004 L1690 1000 L1680 1004 L1666 1007 L1662 996 L1656 988 L1658 978 Z" fill="#36424a"/>
 <text x="1683" y="991" font-family="Liberation Sans" font-weight="bold" font-size="26" fill="#c9ced2" letter-spacing="12" transform="translate(1683 991) scale(0.9 1) translate(-1683 -991)">TVW</text>
</svg>
<div class="t" id="dt1" style="left:1808.5px;top:828px;font-size:25px;font-weight:bold;color:#f4f6fa;transform-origin:0 0;transform:scaleX(1.04)">08/04/26</div>
<div class="t" id="dt2" style="left:1771px;top:860px;font-size:25px;font-weight:bold;color:#f4f6fa;transform-origin:0 0;transform:scaleX(0.965)">04:18:24 PM</div>
<!-- video thumb -->
<div class="a" style="left:1590px;top:402px;width:158px;height:89px;border-radius:6px;overflow:hidden;background:#9d9a8f">
 <div class="a" style="left:0;top:0;width:158px;height:15px;background:#cbccc3"></div>
 <div class="a" style="left:88px;top:0;width:70px;height:26px;background:#d9dcd3"></div>
 <div class="a" style="left:100px;top:0;width:12px;height:24px;background:#c9c2b2;filter:blur(1px)"></div>
 <div class="a" style="left:0;top:15px;width:95px;height:10px;background:#85807c;filter:blur(1.5px)"></div>
 <div class="a" style="left:0;top:25px;width:12px;height:60px;background:#8c8884;filter:blur(1px)"></div>
 <div class="a" style="left:36px;top:26px;width:46px;height:10px;background:#2b2627;filter:blur(0.8px)"></div>
 <div class="a" style="left:74px;top:25px;width:14px;height:10px;background:#2b2627;filter:blur(0.8px)"></div>
 <div class="a" style="left:14px;top:18px;width:20px;height:55px;border-radius:6px;background:#4d3c3f;filter:blur(2px)"></div>
 <div class="a" style="left:18px;top:26px;width:12px;height:16px;border-radius:4px;background:#9c7e84;filter:blur(2px)"></div>
 <div class="a" style="left:95px;top:22px;width:63px;height:40px;background:#8f8a88;filter:blur(2.5px);opacity:0.85"></div>
 <div class="a" style="left:96px;top:20px;width:12px;height:14px;border-radius:5px;background:#5a4858;filter:blur(1.5px)"></div>
 <div class="a" style="left:112px;top:33px;width:20px;height:12px;background:#5e5a72;filter:blur(2px)"></div>
 <div class="a" style="left:132px;top:22px;width:10px;height:10px;border-radius:4px;background:#3d3536;filter:blur(1.5px)"></div>
 <div class="a" style="left:146px;top:22px;width:10px;height:14px;border-radius:4px;background:#d8d2cc;filter:blur(1.5px)"></div>
 <div class="a" style="left:140px;top:45px;width:14px;height:18px;background:#5a5456;filter:blur(2px)"></div>
 <svg class="a" style="left:0;top:0;filter:blur(0.7px)" width="158" height="89"><path d="M78 26L92 25L113 55L103 61L86 40Z" fill="#2c2627"/><path d="M26 50L34 46L66 60L60 68Z" fill="#d5d2ca"/><path d="M108 47L124 45L138 63L116 67Z" fill="#d8d6d0"/></svg>
 <div class="a" style="left:2px;top:71px;width:94px;height:16px;border-radius:5px;background:rgba(45,40,40,0.72)"></div>
 <svg class="a" style="left:3px;top:75px" width="14" height="11"><path d="M1.5 10v-2M4.5 10v-4M7.5 10v-6M10.5 10v-8" stroke="#fff" stroke-width="2"/></svg>
 <div class="t" style="left:16px;top:75px;font-size:9.5px;color:#fff">SBCTC In Person</div>
</div>
</body></html>
